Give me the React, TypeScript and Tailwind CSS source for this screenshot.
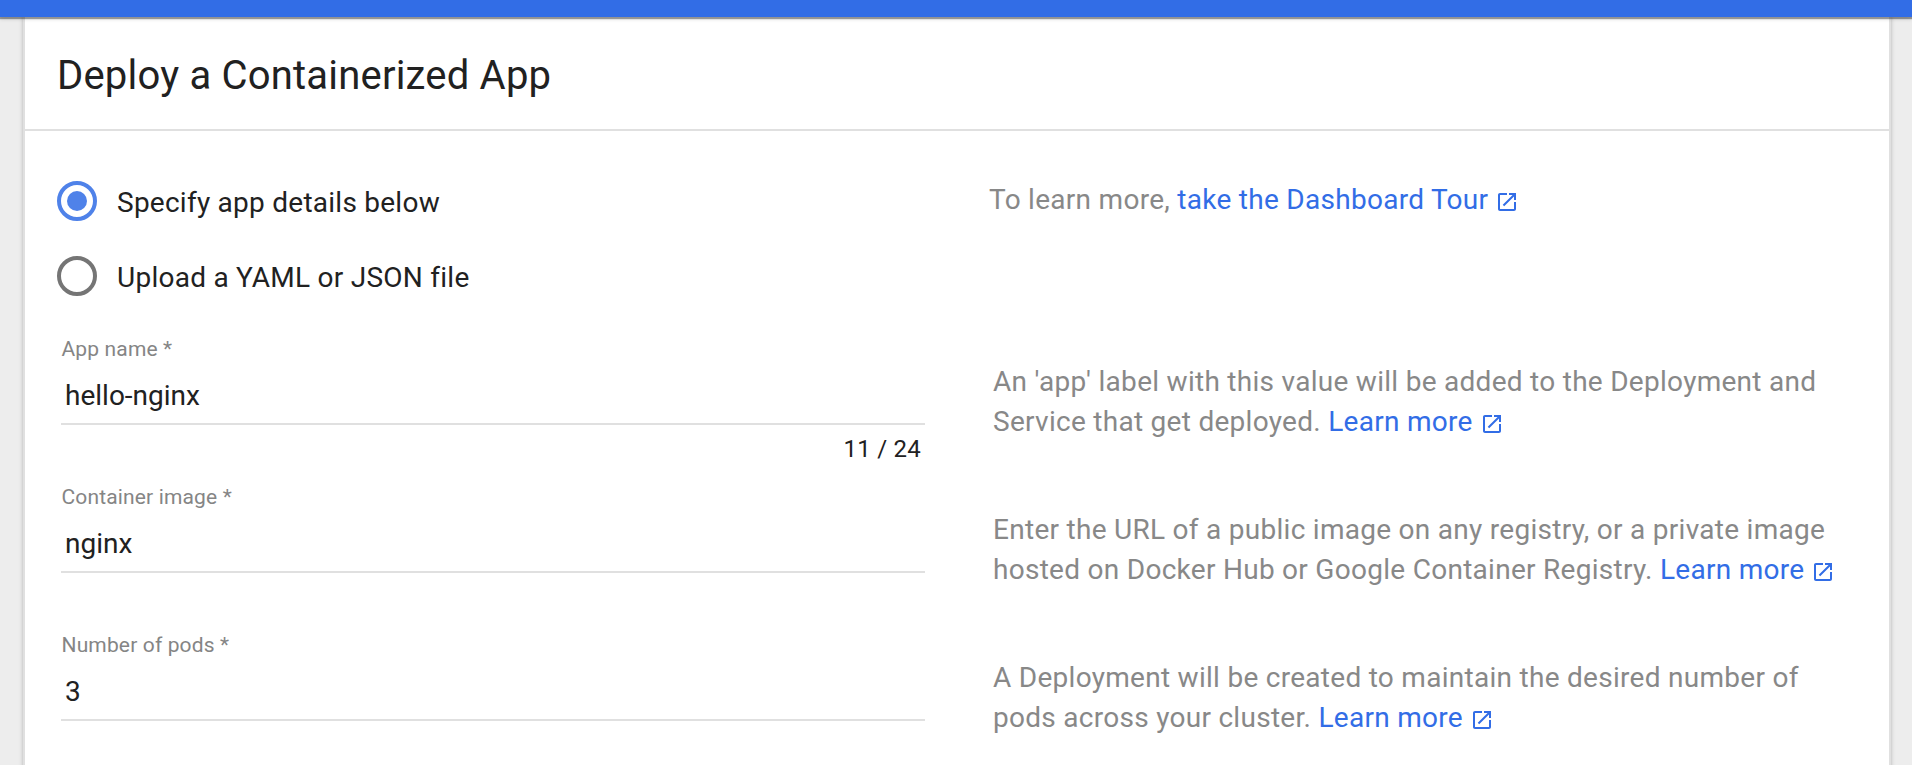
import type { ReactNode } from 'react';

function LaunchIcon({ className = '' }: { className?: string }) {
  return (
    <svg viewBox="0 0 24 24" fill="currentColor" className={`inline-block h-6 w-6 ${className}`}>
      <path d="M19 19H5V5h7V3H5c-1.11 0-2 .9-2 2v14c0 1.1.89 2 2 2h14c1.1 0 2-.9 2-2v-7h-2v7zM14 3v2h3.59l-9.83 9.83 1.41 1.41L19 6.41V10h2V3h-7z" />
    </svg>
  );
}

function DocLink({ children }: { children: ReactNode }) {
  return (
    <a className="whitespace-nowrap text-[#326de6]">
      {children}
      <LaunchIcon className="ml-[7px] align-[-5px]" />
    </a>
  );
}

function RadioOption({ label, checked }: { label: string; checked?: boolean }) {
  return (
    <label className="flex h-10 items-center gap-5">
      <span
        className={`flex size-10 items-center justify-center rounded-full border-4 ${
          checked ? 'border-[#4f82e9]' : 'border-[#757575]'
        }`}
      >
        {checked && <span className="size-5 rounded-full bg-[#4f82e9]" />}
      </span>
      <span className="pt-[3px] leading-10 tracking-[0.009em]">{label}</span>
    </label>
  );
}

type FieldProps = { label: string; value: string; counter?: string; children: ReactNode };

function FieldRow({ label, value, counter, children }: FieldProps) {
  return (
    <div className="flex h-[148px]">
      <div className="ml-1 w-[864px]">
        <div className="h-[35px] pl-[0.5px] pt-[2px] text-[21px] leading-[33px] tracking-[0.007em] text-[#858585]">{label}</div>
        <div className="box-content h-[57px] border-b-2 border-[#e0e0e0] pl-1 leading-[60px] tracking-normal">{value}</div>
        {counter && <div className="pr-1 pt-1 text-right text-2xl leading-10 tracking-[0.01em]">{counter}</div>}
      </div>
      <p className="ml-[68px] whitespace-nowrap pt-[31px] leading-10 text-[#888]">{children}</p>
    </div>
  );
}

export default function App() {
  return (
    <div className="flex h-[765px] flex-col overflow-hidden bg-[#ededed] font-[Roboto,sans-serif] text-[28px] tracking-[0.01em] text-[#212121]">
      <header className="relative z-10 h-[17px] shrink-0 bg-[#326de6] shadow-[0_2px_1px_rgba(0,0,0,0.35),0_2px_4px_rgba(0,0,0,0.15)]" />
      <main className="ml-[25px] h-[748px] w-[1864px] bg-white shadow-[0_0_0_2px_#e0e0e0,0_2px_4px_2px_rgba(0,0,0,0.25)]">
        <h1 className="h-[114px] border-b-2 border-[#e0e0e0] pl-8 pt-[3px] text-[40px] leading-[112px] tracking-[0.005em]">
          Deploy a Containerized App
        </h1>
        <div className="pl-8 pt-[50px]">
          <div className="flex h-[150px]">
            <div className="flex w-[932px] flex-col gap-[35px]">
              <RadioOption label="Specify app details below" checked />
              <RadioOption label="Upload a YAML or JSON file" />
            </div>
            <p className="-mt-px leading-10 text-[#888]">
              To learn more, <DocLink>take the Dashboard Tour</DocLink>
            </p>
          </div>
          <FieldRow label="App name *" value="hello-nginx" counter="11 / 24">
            An 'app' label with this value will be added to the Deployment and
            <br />
            Service that get deployed. <DocLink>Learn more</DocLink>
          </FieldRow>
          <FieldRow label="Container image *" value="nginx">
            Enter the URL of a public image on any registry, or a private image
            <br />
            hosted on Docker Hub or Google Container Registry. <DocLink>Learn more</DocLink>
          </FieldRow>
          <FieldRow label="Number of pods *" value="3">
            A Deployment will be created to maintain the desired number of
            <br />
            pods across your cluster. <DocLink>Learn more</DocLink>
          </FieldRow>
        </div>
      </main>
    </div>
  );
}
